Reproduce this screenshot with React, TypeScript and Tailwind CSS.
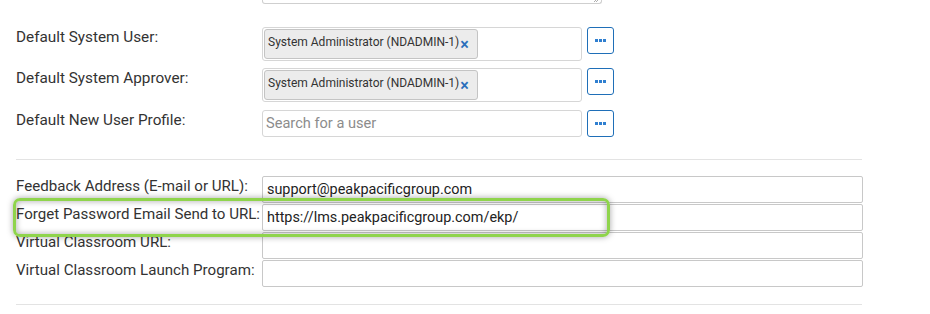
import React from "react";

function DotsButton() {
  return (
    <button className="ml-[5px] flex h-[27px] w-[27px] shrink-0 items-center justify-center rounded-[3px] border border-[#1f6fb8] bg-white">
      <span className="flex gap-[1px]">
        <span className="h-[3px] w-[3px] bg-[#2f7fd0]" />
        <span className="h-[3px] w-[3px] bg-[#2f7fd0]" />
        <span className="h-[3px] w-[3px] bg-[#2f7fd0]" />
      </span>
    </button>
  );
}

function Chip() {
  return (
    <div className="flex h-[30px] w-[214px] items-start rounded-[3px] border border-[#c4c4c4] bg-[#ececec] pl-[3px] pt-[4px] text-[12px] leading-[16px] text-[#333]">
      <span className="whitespace-nowrap">System Administrator (NDADMIN-1)</span>
      <span className="ml-[1px] mt-[3px] text-[16px] font-semibold leading-[16px] text-[#2a6ebb]">×</span>
    </div>
  );
}

function UserRow({ label, chip }: { label: string; chip: boolean }) {
  return (
    <div className="flex items-start">
      <div className="w-[246px] shrink-0 whitespace-nowrap text-[15.3px] leading-[20px] text-[#333]">{label}</div>
      {chip ? (
        <div className="h-[34px] w-[320px] shrink-0 rounded-[3px] border border-[#d6d6d6] p-[1px]">
          <Chip />
        </div>
      ) : (
        <div className="flex h-[27px] w-[320px] shrink-0 items-center rounded-[3px] border border-[#d6d6d6] pl-[3px] text-[14.6px] text-[#8c8c8c]">
          Search for a user
        </div>
      )}
      <DotsButton />
    </div>
  );
}

function TextRow({ label, value }: { label: string; value?: string }) {
  return (
    <div className="flex h-[27px] items-start">
      <div className="w-[246px] shrink-0 whitespace-nowrap text-[15.1px] leading-[20px] text-[#333]">{label}</div>
      <div className="relative flex h-[27px] w-[601px] shrink-0 items-center rounded-[2px] border border-[#c8c8c8] bg-white pl-[4px] text-[14.4px] text-[#222]">
        {value}
      </div>
    </div>
  );
}

export default function App() {
  return (
    <div className="relative h-[314px] w-[930px] overflow-hidden bg-white font-['Roboto',sans-serif]">
      <div className="pl-4">
        <div className="relative ml-[246px] h-[4px] w-[340px] rounded-b-[3px] border border-t-0 border-[#cfcfcf]">
          <svg className="absolute right-[2px] top-[-3px]" width="6" height="6" viewBox="0 0 6 6">
            <path d="M1 5 L5 1 M3 5 L5 3" stroke="#999" strokeWidth="0.8" />
          </svg>
        </div>

        <div className="mt-[23px]">
          <UserRow label="Default System User:" chip />
        </div>
        <div className="mt-[7px]">
          <UserRow label="Default System Approver:" chip />
        </div>
        <div className="mt-[8px]">
          <UserRow label="Default New User Profile:" chip={false} />
        </div>

        <div className="mt-[22px] h-px w-[846px] bg-[#e3e3e3]" />

        <div className="mt-[16px] flex flex-col gap-[1px]">
          <TextRow label="Feedback Address (E-mail or URL):" value="support@peakpacificgroup.com" />
          <TextRow label="Forget Password Email Send to URL:" value="https://lms.peakpacificgroup.com/ekp/" />
          <TextRow label="Virtual Classroom URL:" />
          <TextRow label="Virtual Classroom Launch Program:" />
        </div>

        <div className="mt-[17px] h-px w-[846px] bg-[#e3e3e3]" />
      </div>

      <div className="pointer-events-none absolute left-[13px] top-[198px] h-[39px] w-[597px] rounded-[7px] border-[3.5px] border-[#8fd44c] shadow-[0_0_6px_rgba(0,0,0,0.35),inset_0_0_6px_rgba(0,0,0,0.35)]" />
    </div>
  );
}
